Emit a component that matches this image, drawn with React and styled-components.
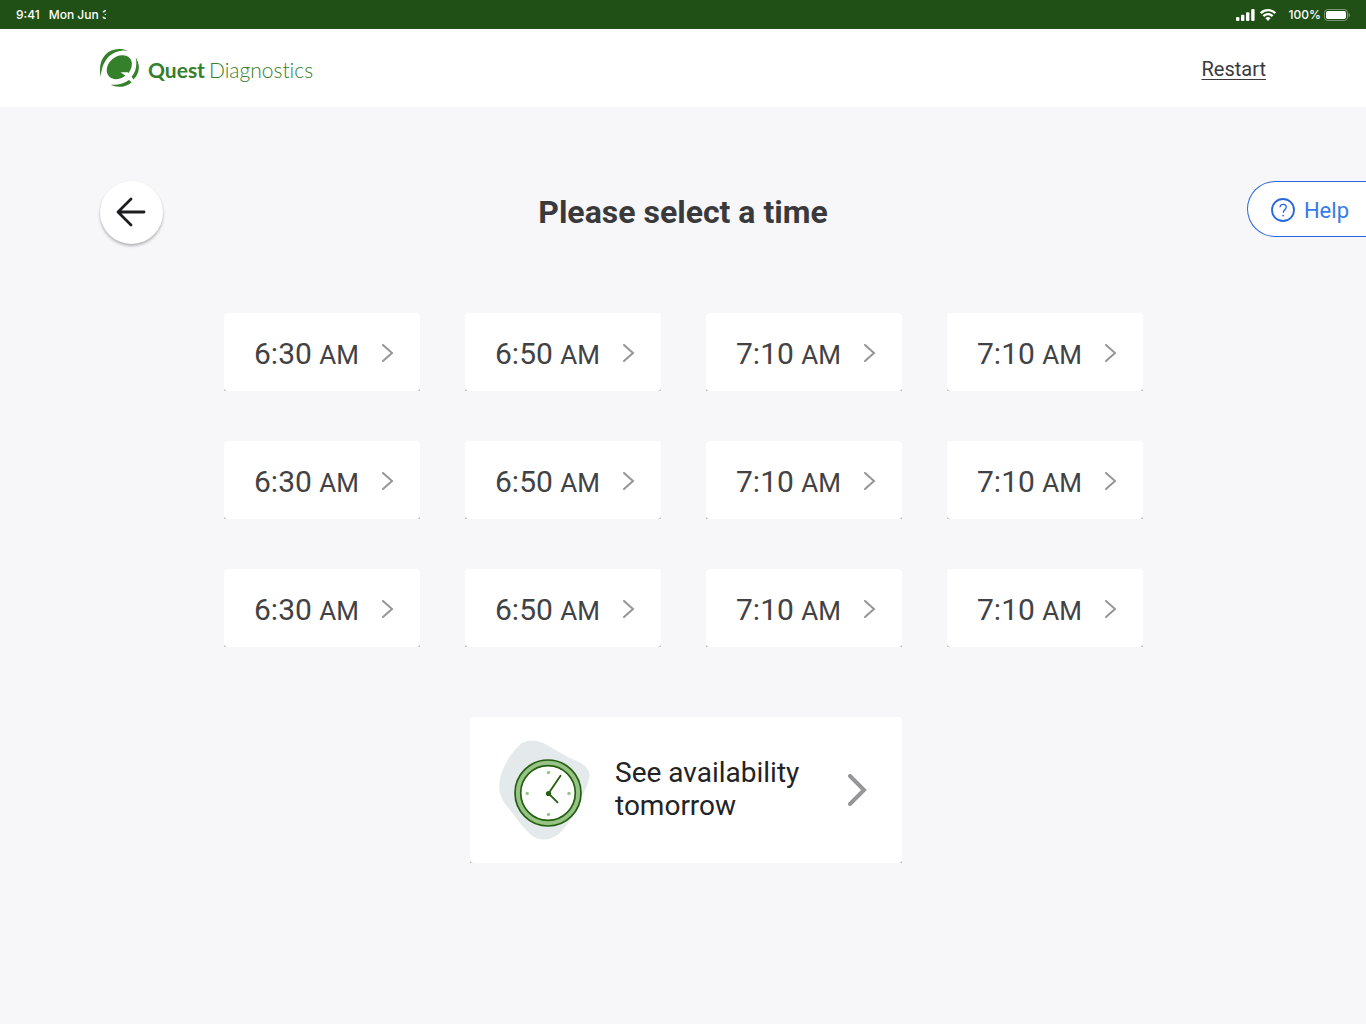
import React from 'react';
import styled, { createGlobalStyle } from 'styled-components';

const GlobalStyle = createGlobalStyle`
  * {
    box-sizing: border-box;
  }

  body {
    margin: 0;
    background: #f7f7f9;
    color: #3a3a3c;
    font-family: Roboto, 'Liberation Sans', sans-serif;
  }

  button {
    border: 0;
    font-family: inherit;
    cursor: pointer;
  }
`;

const StatusBar = styled.div`
  display: flex;
  align-items: center;
  justify-content: space-between;
  height: 29px;
  padding: 0 16px;
  background: #215016;
  color: #fff;
  font-family: Inter, sans-serif;
  font-size: 12px;
  font-weight: 500;
`;

const StatusGroup = styled.div`
  display: flex;
  align-items: center;
  gap: ${(props) => props.$gap}px;
`;

const StatusDate = styled.span`
  width: 57px;
  overflow: hidden;
  white-space: nowrap;
`;

const Header = styled.header`
  display: flex;
  align-items: center;
  justify-content: space-between;
  height: 78px;
  padding: 0 100px 0 99px;
  background: #fff;
`;

const Logo = styled.div`
  display: flex;
  align-items: center;
  gap: 8px;
  color: #35802b;
  font-family: Lato, sans-serif;
  font-size: 21px;
  font-variant-ligatures: none;
`;

const LogoName = styled.span`
  display: flex;
  gap: 4px;
  padding-top: 2px;
  font-weight: 300;
`;

const LogoStrong = styled.strong`
  font-weight: 700;
`;

const RestartLink = styled.a`
  padding-top: 2px;
  color: #3a3a3c;
  font-size: 20px;
  text-decoration: underline;
  text-decoration-thickness: 1px;
  text-underline-offset: 3px;
`;

const TitleRow = styled.div`
  display: grid;
  grid-template-columns: 1fr auto 1fr;
  align-items: start;
  margin-top: 74px;
`;

const BackButton = styled.button`
  display: flex;
  align-items: center;
  justify-content: center;
  width: 63px;
  height: 63px;
  margin-left: 100px;
  padding: 0 1px 1px 0;
  border-radius: 50%;
  background: #fff;
  color: #1d1d1f;
  box-shadow: 0 2px 3px rgba(0, 0, 0, 0.28);
`;

const Title = styled.h1`
  margin: 0;
  color: #3a3a3c;
  font-size: 32px;
  font-weight: 700;
  line-height: 62px;
`;

const HelpButton = styled.button`
  display: flex;
  align-items: center;
  justify-self: end;
  gap: 9px;
  height: 56px;
  padding: 2px 17px 0 23px;
  border: 1px solid #2768dc;
  border-right: 0;
  border-radius: 28px 0 0 28px;
  background: #fff;
  color: #347be8;
  font-size: 22px;
`;

const TimeList = styled.ul`
  display: grid;
  grid-template-columns: repeat(4, 1fr);
  gap: 50px 45px;
  margin: 69px 0 0;
  padding: 0 223px 0 224px;
  list-style: none;
`;

const Card = styled.li`
  background: linear-gradient(#c4c4c8, #c4c4c8) bottom / 100% 2px no-repeat;
`;

const WideCard = styled(Card)`
  grid-column: 1 / 4;
  justify-self: end;
  width: 432px;
  margin-top: 20px;
`;

const CardButton = styled.button`
  display: flex;
  align-items: center;
  justify-content: space-between;
  width: 100%;
  border-radius: 4px;
  background: #fff;
  text-align: left;
`;

const TimeButton = styled(CardButton)`
  height: 78px;
  padding: 2px 26px 0 30px;
  color: #424244;
  font-size: 30px;
`;

const Period = styled.span`
  font-size: 26px;
`;

const TomorrowButton = styled(CardButton)`
  height: 146px;
  padding: 0 34px 0 28px;
  color: #232325;
  font-size: 28px;
  line-height: 33px;
`;

const TomorrowText = styled.span`
  flex: 1;
  padding: 0 0 2px 24px;
`;

const TIMES = ['6:30', '6:50', '7:10', '7:10'];
const SLOTS = [...TIMES, ...TIMES, ...TIMES];

function SignalIcon() {
  return (
    <svg width="19" height="12" viewBox="0 0 19 12" fill="#fff">
      <rect x="0" y="8" width="3.4" height="4" rx="1" />
      <rect x="5" y="5.8" width="3.4" height="6.2" rx="1" />
      <rect x="10" y="3.2" width="3.4" height="8.8" rx="1" />
      <rect x="15.2" y="0" width="3.4" height="12" rx="1" />
    </svg>
  );
}

function WifiIcon() {
  return (
    <svg width="16" height="12" viewBox="0 0 16 12" fill="none" stroke="#fff" strokeWidth="2.3">
      <path d="M0.8 4.2a10.2 10.2 0 0 1 14.4 0" />
      <path d="M3.4 7.1a6.5 6.5 0 0 1 9.2 0" />
      <path d="M8 12 5.4 9.3a3.7 3.7 0 0 1 5.2 0Z" fill="#fff" stroke="none" />
    </svg>
  );
}

function BatteryIcon() {
  return (
    <svg width="26" height="12" viewBox="0 0 26 12" fill="none">
      <rect x="0.5" y="0.5" width="23" height="11" rx="3.2" stroke="#fff" strokeOpacity="0.4" />
      <rect x="2" y="2" width="20" height="8" rx="1.8" fill="#fff" />
      <path d="M24.600 4v4.200c0.900-0.400 1.300-1.200 1.300-2.100s-0.400-1.700-1.300-2.100Z" fill="#fff" fillOpacity="0.45" />
    </svg>
  );
}

function LogoMark() {
  return (
    <svg width="41" height="40" viewBox="0 0 41 40" fill="#35802b">
      <path d="M1.800 29C-2 13 7 1 20 1c3.500 0 6.500 0.500 9.200 1.700C22 1.800 13.500 3.800 8.300 10.200 4.300 15.200 2.300 21 1.800 29Z" />
      <path d="M36.800 9.500c4.400 7 4.300 15.700-2.300 22l-2.300-2.200c5-5.800 5.900-12.500 4.600-19.800Z" />
      <path d="M11.500 36.600c7 0.700 13.500-0.800 18.800-4.800l2.200 2.600C26.500 39.400 18 40.200 11.500 36.600Z" />
      <ellipse cx="20.300" cy="19.200" rx="13.800" ry="10.600" transform="rotate(-40 20.300 19.200)" />
      <path d="M21.600 24.200h7.200l5 6-2.600 3-3.800-4.800Z" fill="#fff" />
    </svg>
  );
}

function ArrowLeftIcon() {
  return (
    <svg
      width="30"
      height="30"
      viewBox="0 0 30 30"
      fill="none"
      stroke="currentColor"
      strokeWidth="2.8"
      strokeLinecap="round"
      strokeLinejoin="round"
    >
      <path d="M28 15H2.500M15 2 2 15l13 13" />
    </svg>
  );
}

function HelpIcon() {
  return (
    <svg width="24" height="24" viewBox="0 0 24 24" fill="none" stroke="#2768dc">
      <circle cx="12" cy="12" r="11" strokeWidth="1.800" />
      <path d="M9 9.200C9.100 7.300 10.300 6.300 12.100 6.300s3.200 1.100 3.200 2.800c0 2.300-3 2.700-3 5.600" strokeWidth="1.300" />
      <circle cx="12.200" cy="17.600" r="0.900" fill="#2768dc" stroke="none" />
    </svg>
  );
}

function ChevronIcon({ width, height, strokeWidth }) {
  return (
    <svg
      width={width}
      height={height}
      viewBox={`0 0 ${width} ${height}`}
      fill="none"
      stroke="#969698"
      strokeWidth={strokeWidth}
      strokeLinecap="round"
    >
      <path
        d={`M${strokeWidth / 2} ${strokeWidth / 2}L${width - strokeWidth} ${height / 2}L${strokeWidth / 2} ${
          height - strokeWidth / 2
        }`}
      />
    </svg>
  );
}

function ClockIcon() {
  return (
    <svg width="93" height="100" viewBox="0 0 93 100" fill="none">
      <path
        d="M5 29C10 18 17 8 24 3 32-1 41 0 49 5c12 7 18 11 30 16 9 4 14 10 12 18-2 10-9 20-15 32-5 11-9 19-18 25-10 6-21 4-27-3C22 84 16 75 8 65-1 53 0 42 5 29Z"
        fill="#e4eaec"
      />
      <circle cx="50" cy="53" r="30" fill="#fff" stroke="#97c387" strokeWidth="6" />
      <circle cx="50" cy="53" r="33" stroke="#24600f" strokeWidth="1.700" />
      <circle cx="50" cy="53" r="27.300" stroke="#24600f" strokeWidth="1.700" />
      <g fill="#97c387">
        <circle cx="50.500" cy="32.500" r="1.700" />
        <circle cx="50.500" cy="74.500" r="1.700" />
        <circle cx="29.200" cy="53.500" r="1.700" />
        <circle cx="71" cy="53.500" r="1.700" />
      </g>
      <circle cx="50.500" cy="53.500" r="2.600" fill="#24600f" />
      <path d="M62.500 35.800 50.500 53.500l9 8.800" stroke="#24600f" strokeWidth="1.800" strokeLinecap="round" />
    </svg>
  );
}

function App() {
  return (
    <>
      <GlobalStyle />
      <StatusBar>
        <StatusGroup $gap={9}>
          <span>9:41</span>
          <StatusDate>Mon Jun 3</StatusDate>
        </StatusGroup>
        <StatusGroup $gap={13}>
          <StatusGroup $gap={5}>
            <SignalIcon />
            <WifiIcon />
          </StatusGroup>
          <StatusGroup $gap={3}>
            <span>100%</span>
            <BatteryIcon />
          </StatusGroup>
        </StatusGroup>
      </StatusBar>
      <Header>
        <Logo>
          <LogoMark />
          <LogoName>
            <LogoStrong>Quest</LogoStrong>
            <span>Diagnostics</span>
          </LogoName>
        </Logo>
        <RestartLink href="#restart">Restart</RestartLink>
      </Header>
      <main>
        <TitleRow>
          <BackButton aria-label="Back">
            <ArrowLeftIcon />
          </BackButton>
          <Title>Please select a time</Title>
          <HelpButton>
            <HelpIcon />
            Help
          </HelpButton>
        </TitleRow>
        <TimeList>
          {SLOTS.map((time, index) => (
            <Card key={index}>
              <TimeButton>
                <span>
                  {time} <Period>AM</Period>
                </span>
                <ChevronIcon width={12} height={18} strokeWidth={2} />
              </TimeButton>
            </Card>
          ))}
          <WideCard>
            <TomorrowButton>
              <ClockIcon />
              <TomorrowText>
                See availability
                <br />
                tomorrow
              </TomorrowText>
              <ChevronIcon width={20} height={32} strokeWidth={4} />
            </TomorrowButton>
          </WideCard>
        </TimeList>
      </main>
    </>
  );
}

export default App;
